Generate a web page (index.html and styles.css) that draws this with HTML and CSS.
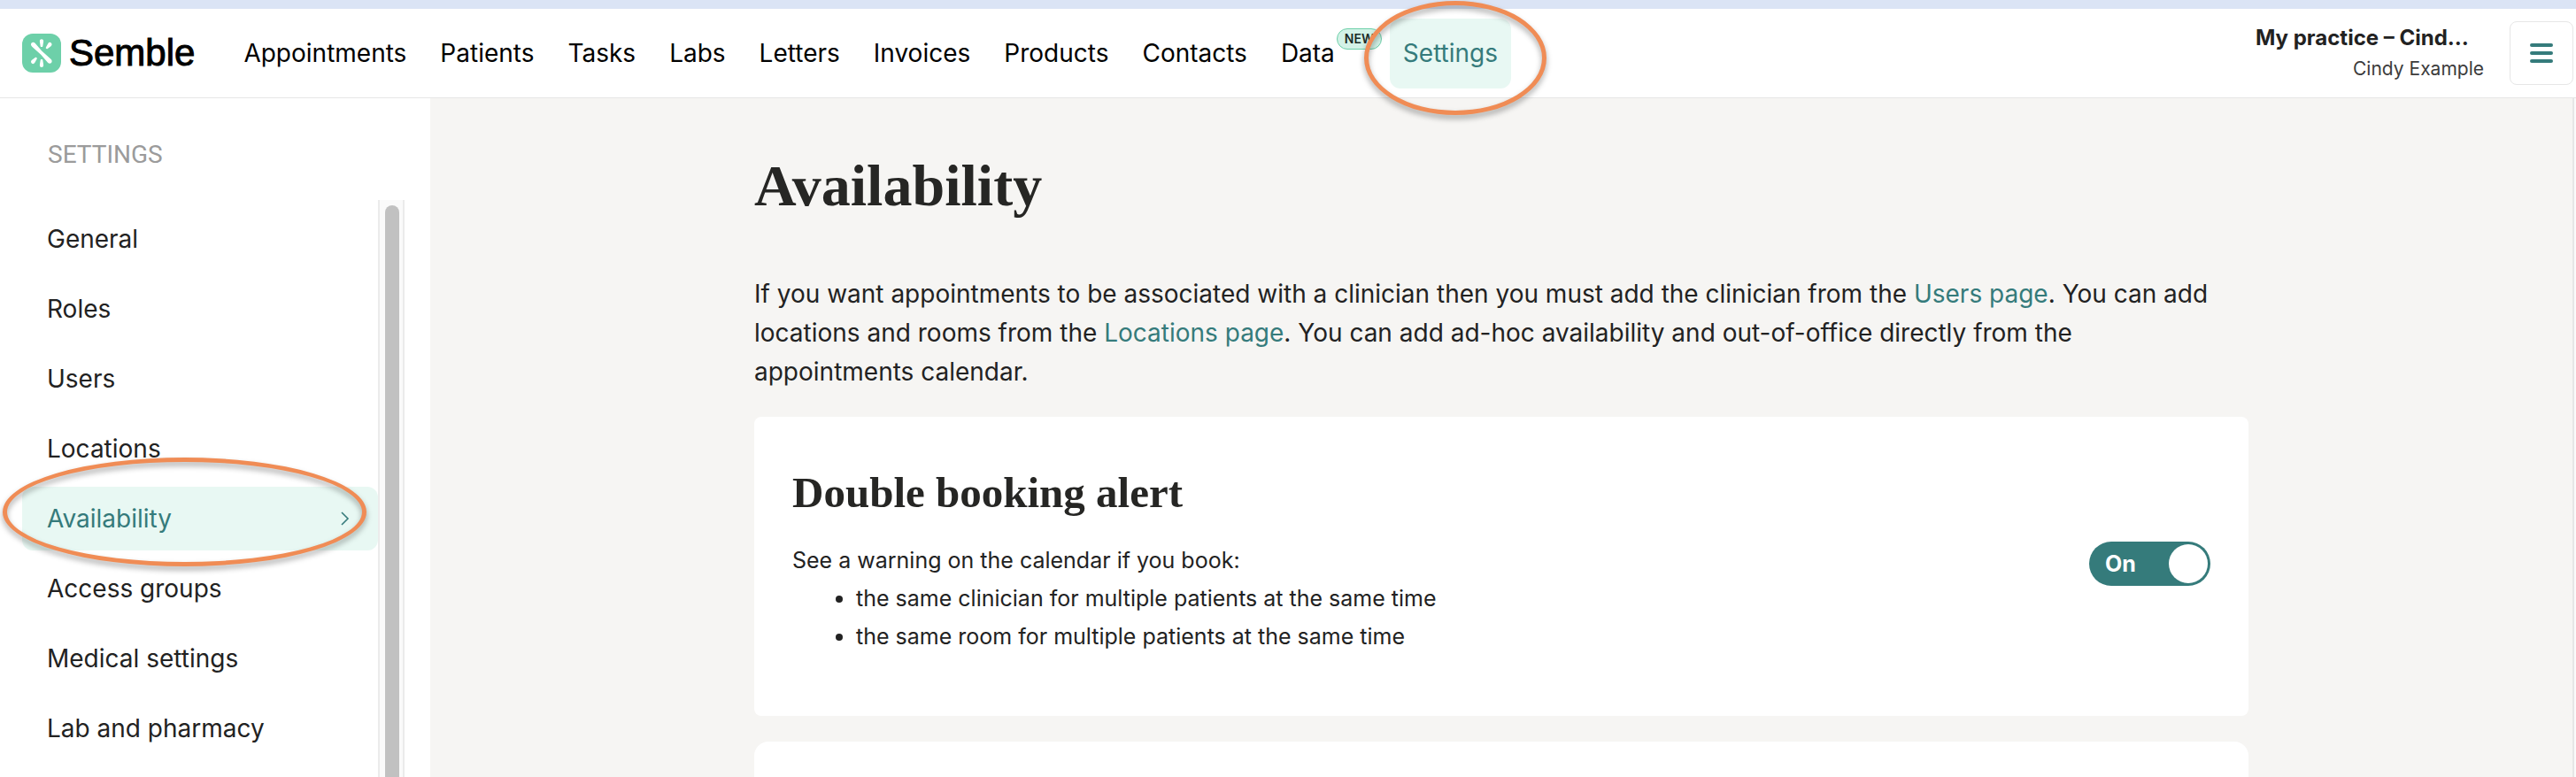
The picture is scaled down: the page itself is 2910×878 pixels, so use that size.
FILE: index.html
```html
<!DOCTYPE html>
<html lang="en">
<head>
  <meta charset="UTF-8">
  <meta name="viewport" content="width=device-width, initial-scale=1.0">
  <title>Availability - Semble</title>
  <link rel="stylesheet" href="styles.css">
</head>
<body>
  <!-- Top bar -->
  <header class="topbar">
    <a class="logo" href="#">
      <svg class="logo-icon" viewBox="0 0 44 44" aria-hidden="true">
        <rect width="44" height="44" rx="12" fill="#6dd0a9"/>
        <g fill="#fff">
          <path d="M10.600 10.600c1.200-1.200 2.800-1 4 .2l7.800 9 10 9c1.500 1.400 1.600 3 .6 4.200-1.200 1.200-2.800 1-4-.2l-7.800-9-10-9c-1.500-1.400-1.600-3-.6-4.200z"/>
          <path d="M22 6.200c1.500 0 2.300 1.200 2.100 2.800l-.8 5.200c-.2 1.200-2.400 1.200-2.600 0l-.8-5.200c-.2-1.600.6-2.800 2.100-2.800z"/>
          <path d="M22 38c1.500 0 2.300-1.200 2.100-2.800l-.8-5.200c-.2-1.200-2.400-1.200-2.600 0l-.8 5.200c-.2 1.600.6 2.800 2.100 2.800z"/>
          <path d="M32.800 10.600c1.200 1.200.9 2.700-.3 3.600l-3.700 2.800c-1.200.8-2.600-.6-1.800-1.800l2.400-4.200c.8-1.300 2.300-1.600 3.400-.4z"/>
          <path d="M10.800 33.400c-1.200-1.200-.9-2.700.3-3.600l3.700-2.800c1.200-.8 2.600.6 1.800 1.800l-2.400 4.200c-.8 1.300-2.300 1.600-3.400.4z"/>
        </g>
      </svg>
      <span class="logo-text">Semble</span>
    </a>

    <nav class="main-nav">
      <a href="#">Appointments</a>
      <a href="#">Patients</a>
      <a href="#">Tasks</a>
      <a href="#">Labs</a>
      <a href="#">Letters</a>
      <a href="#">Invoices</a>
      <a href="#">Products</a>
      <a href="#">Contacts</a>
      <a href="#">Data<span class="badge">NEW</span></a>
      <a href="#" class="active">Settings<span class="ring ring-nav"></span></a>
    </nav>

    <div class="account">
      <div class="practice">My practice – Cind…</div>
      <div class="user">Cindy Example</div>
    </div>
    <button class="menu-button" type="button" aria-label="Menu">
      <svg width="26" height="24" viewBox="0 0 26 24" aria-hidden="true">
        <path d="M2 3h22M2 12h22M2 21h22" stroke="#357b7b" stroke-width="4" stroke-linecap="round"/>
      </svg>
    </button>
  </header>

  <div class="layout">
    <!-- Settings menu -->
    <aside class="sidebar">
      <div class="sidebar-title">SETTINGS</div>
      <div class="sidebar-body">
        <nav class="side-nav">
          <a href="#">General</a>
          <a href="#">Roles</a>
          <a href="#">Users</a>
          <a href="#">Locations</a>
          <a href="#" class="active">Availability
            <svg width="12" height="18" viewBox="0 0 12 18" aria-hidden="true">
              <path d="M2 2l7 7-7 7" fill="none" stroke="#357b7b" stroke-width="1.600"/>
            </svg>
            <span class="ring ring-side"></span>
          </a>
          <a href="#">Access groups</a>
          <a href="#">Medical settings</a>
          <a href="#">Lab and pharmacy</a>
        </nav>
        <div class="scroll-track"><div class="scroll-thumb"></div></div>
      </div>
    </aside>

    <main class="content">
      <div class="column">
        <h1>Availability</h1>
        <p class="intro">If you want appointments to be associated with a clinician then you must add the clinician from the <a href="#">Users page</a>. You can add locations and rooms from the <a href="#">Locations page</a>. You can add ad-hoc availability and out-of-office directly from the appointments calendar.</p>

        <section class="card">
          <h2>Double booking alert</h2>
          <div class="card-row">
            <div>
              <p>See a warning on the calendar if you book:</p>
              <ul>
                <li>the same clinician for multiple patients at the same time</li>
                <li>the same room for multiple patients at the same time</li>
              </ul>
            </div>
            <label class="toggle">
              <span>On</span>
              <input type="checkbox" role="switch" checked>
            </label>
          </div>
        </section>

        <section class="card card-next"></section>
      </div>
    </main>
    <div class="page-track"></div>
  </div>
</body>
</html>
```
FILE: styles.css
```css
:root {
  --teal: #357b7b;
  --mint: #e8f8f3;
  --line: #e6e6e6;
  --ring: #f08c55;
}
* {
  box-sizing: border-box;
}
body {
  margin: 0;
  height: 100vh;
  display: flex;
  flex-direction: column;
  background: #fff;
  color: #222;
  font-family: Inter, "Liberation Sans", sans-serif;
  font-size: 28px;
}
a {
  color: inherit;
  text-decoration: none;
}
h1, h2, p, ul {
  margin: 0;
}
h1, h2 {
  font-family: "Liberation Serif", serif;
  font-weight: bold;
  color: #262624;
}

/* Top bar */
.topbar {
  flex: none;
  display: flex;
  align-items: center;
  height: 111px;
  padding: 0 3px 0 25px;
  border-top: 10px solid #dbe4f5;
  border-bottom: 1px solid var(--line);
  color: #000;
}
.logo {
  display: flex;
  align-items: center;
  gap: 9px;
  margin-right: 55px;
}
.logo-icon {
  width: 44px;
  height: 44px;
}
.logo-text {
  font-family: "Liberation Sans", sans-serif;
  font-size: 42px;
  line-height: 44px;
  -webkit-text-stroke: 1px #000;
}
.main-nav {
  display: flex;
  align-items: center;
  gap: 38px;
}
.main-nav a {
  position: relative;
  line-height: 79px;
}
.main-nav .active {
  margin-left: 24px;
  padding: 0 15px;
  border-radius: 12px;
  background: var(--mint);
  color: var(--teal);
}
.badge {
  position: absolute;
  left: 100%;
  top: 11px;
  margin-left: 2px;
  height: 24px;
  padding: 0 8px;
  border: 1px solid #6dd0a9;
  border-radius: 12px;
  background: #d3f2e7;
  color: #1c2b27;
  font-size: 14px;
  font-weight: 600;
  line-height: 21px;
}

/* Highlight rings */
.ring {
  position: absolute;
  z-index: 2;
  border: 5px solid var(--ring);
  border-radius: 50%;
  filter: drop-shadow(0 4px 3px rgba(0, 0, 0, 0.35));
  pointer-events: none;
}
.ring-nav {
  inset: -20px -40px -30px -29px;
}
.ring-side {
  inset: -33px 13px -18px -22px;
}

.account {
  margin-left: auto;
  margin-right: 29px;
  width: 258px;
}
.practice {
  font-size: 24px;
  font-weight: 700;
  line-height: 36px;
  white-space: nowrap;
  color: #222;
}
.user {
  font-size: 21px;
  line-height: 34px;
  text-align: right;
  color: #3c3c3c;
}
.menu-button {
  display: flex;
  align-items: center;
  justify-content: center;
  width: 72px;
  height: 72px;
  padding: 0;
  border: 1px solid var(--line);
  border-radius: 8px;
  background: #fff;
}

/* Settings menu */
.layout {
  flex: 1;
  display: flex;
  min-height: 0;
  overflow: hidden;
}
.sidebar {
  flex: none;
  width: 486px;
  display: flex;
  flex-direction: column;
}
.sidebar-title {
  padding: 42px 54px 29px;
  font-family: Roboto, sans-serif;
  line-height: 44px;
  color: #9b9b9b;
}
.sidebar-body {
  flex: 1;
  display: flex;
  min-height: 0;
  padding-left: 25px;
}
.side-nav {
  flex: 1;
  display: flex;
  flex-direction: column;
  gap: 7px;
  padding-top: 8px;
}
.side-nav a {
  flex: none;
  position: relative;
  display: flex;
  align-items: center;
  justify-content: space-between;
  height: 72px;
  padding: 0 31px 0 28px;
  border-radius: 12px;
}
.side-nav .active {
  background: var(--mint);
  color: var(--teal);
}
.scroll-track {
  width: 30px;
  margin-right: 29px;
  padding: 6px 4px 0 6px;
  border: solid #ebebeb;
  border-width: 0 2px;
  background: #fafafa;
}
.scroll-thumb {
  width: 16px;
  height: 100%;
  border-radius: 8px 8px 0 0;
  background: #c1c1c1;
}

/* Page content */
.content {
  flex: 1;
  overflow: hidden;
  background: #f6f5f3;
}
.page-track {
  width: 4px;
  border-left: 2px solid var(--line);
  background: #fafafa;
}
.column {
  max-width: 1688px;
  margin: 0 auto;
  padding-top: 59px;
}
h1 {
  font-size: 66px;
  line-height: 80px;
}
.intro {
  margin: 60px 0 29px;
  padding-right: 24px;
  line-height: 44px;
}
.intro a {
  color: var(--teal);
}
.card {
  margin-bottom: 29px;
  padding: 56px 43px 68px;
  border-radius: 8px;
  background: #fff;
}
.card-next {
  border-radius: 16px;
}
h2 {
  font-size: 49px;
  line-height: 60px;
}
.card-row {
  display: flex;
  justify-content: space-between;
  align-items: flex-start;
  margin-top: 25px;
  font-size: 25px;
  line-height: 43px;
}
.card-row ul {
  padding-left: 72px;
}
.toggle {
  display: flex;
  align-items: center;
  justify-content: space-between;
  width: 137px;
  height: 50px;
  padding: 0 3px 0 18px;
  border-radius: 25px;
  background: var(--teal);
  color: #fff;
  font-weight: 700;
}
.toggle input {
  appearance: none;
  width: 44px;
  height: 44px;
  margin: 0;
  border-radius: 50%;
  background: #fff;
}
```
